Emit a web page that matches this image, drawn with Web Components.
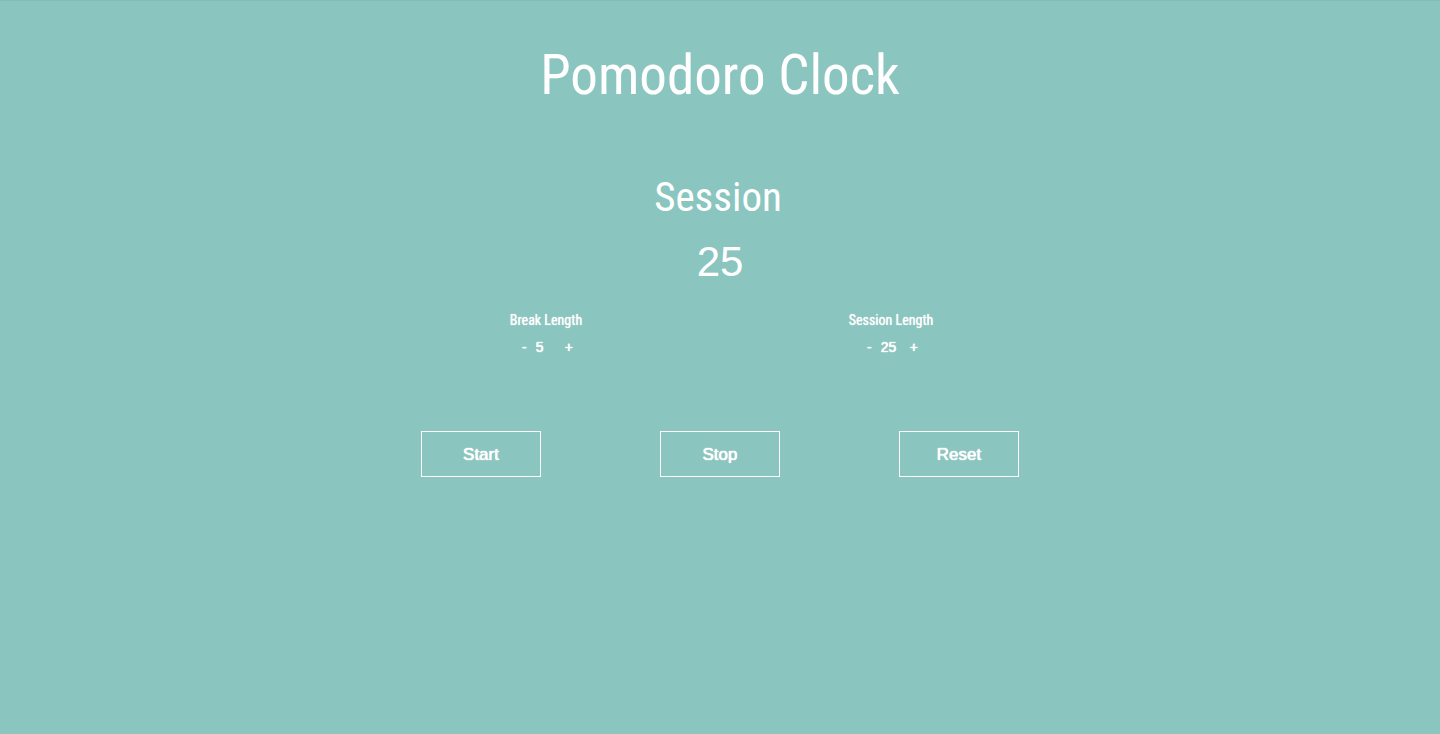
<!DOCTYPE html>
<html lang="en">
<head>
<meta charset="utf-8">
<title>Pomodoro Clock</title>
<style>
  body {
    margin: 0;
    min-height: 100vh;
    box-sizing: border-box;
    border-top: 1px solid #84bdb7;
    background: #8bc5bf;
    color: #fff;
    font-family: "Roboto Condensed", Roboto, sans-serif;
  }
</style>
</head>
<body>
<pomodoro-clock></pomodoro-clock>

<template id="clock">
  <style>
    :host { display: block; padding: 38px 16px 0; }
    h1, h2 { margin: 0; font-weight: 400; text-align: center; }
    h1 { font-size: 55px; line-height: 72px; }
    h2 { margin-top: 54px; padding-right: 4px; font-size: 41px; line-height: 64px; }
    .time { text-align: center; font: 42px/66px "Liberation Sans", sans-serif; }
    .lengths {
      display: grid;
      grid-template-columns: repeat(2, minmax(0, 345px));
      justify-content: center;
      margin-top: 13px;
      padding-right: 3px;
    }
    .actions {
      display: flex;
      flex-wrap: wrap;
      justify-content: center;
      gap: 16px 119px;
      margin-top: 72px;
    }
  </style>
  <h1>Pomodoro Clock</h1>
  <h2>Session</h2>
  <div class="time" role="timer">25</div>
  <div class="lengths">
    <length-stepper value="5">Break Length</length-stepper>
    <length-stepper value="25">Session Length</length-stepper>
  </div>
  <div class="actions">
    <clock-button>Start</clock-button>
    <clock-button>Stop</clock-button>
    <clock-button>Reset</clock-button>
  </div>
</template>

<template id="stepper">
  <style>
    :host { display: flex; flex-direction: column; align-items: center; }
    label { font-size: 14px; line-height: 24px; text-shadow: 0 0 1px #fff; }
    .row { display: flex; align-items: center; margin-top: 3px; padding-left: 3px; }
    button, input {
      margin: 0;
      padding: 0;
      border: 0;
      background: none;
      color: inherit;
      font: 14px/24px "Liberation Sans", sans-serif;
      text-shadow: 0 0 1px #fff, 0 0 1px #fff;
    }
    button { cursor: pointer; }
    input { width: 29px; margin-left: 9px; }
  </style>
  <label for="value"><slot></slot></label>
  <div class="row">
    <button type="button" aria-label="Decrease">-</button>
    <input id="value" type="text" inputmode="numeric" readonly>
    <button type="button" aria-label="Increase">+</button>
  </div>
</template>

<template id="action">
  <style>
    :host { display: block; }
    button {
      width: 120px;
      height: 46px;
      padding: 2px 0 0;
      border: 1px solid #fff;
      background: none;
      color: inherit;
      font: 17px/24px "Liberation Sans", sans-serif;
      text-shadow: 0 0 1px #fff, 0 0 1px #fff;
      cursor: pointer;
    }
  </style>
  <button type="button"><slot></slot></button>
</template>

<script>
  function stamp(host, id) {
    const root = host.attachShadow({ mode: "open" });
    root.append(document.getElementById(id).content.cloneNode(true));
    return root;
  }

  class ClockButton extends HTMLElement {
    constructor() { super(); stamp(this, "action"); }
  }

  class LengthStepper extends HTMLElement {
    constructor() {
      super();
      const root = stamp(this, "stepper");
      this.input = root.querySelector("input");
      const [minus, plus] = root.querySelectorAll("button");
      minus.addEventListener("click", () => this.step(-1));
      plus.addEventListener("click", () => this.step(1));
    }
    connectedCallback() { this.input.value = this.getAttribute("value"); }
    step(delta) { this.input.value = Math.max(1, Number(this.input.value) + delta); }
  }

  class PomodoroClock extends HTMLElement {
    constructor() { super(); stamp(this, "clock"); }
  }

  customElements.define("clock-button", ClockButton);
  customElements.define("length-stepper", LengthStepper);
  customElements.define("pomodoro-clock", PomodoroClock);
</script>
</body>
</html>
